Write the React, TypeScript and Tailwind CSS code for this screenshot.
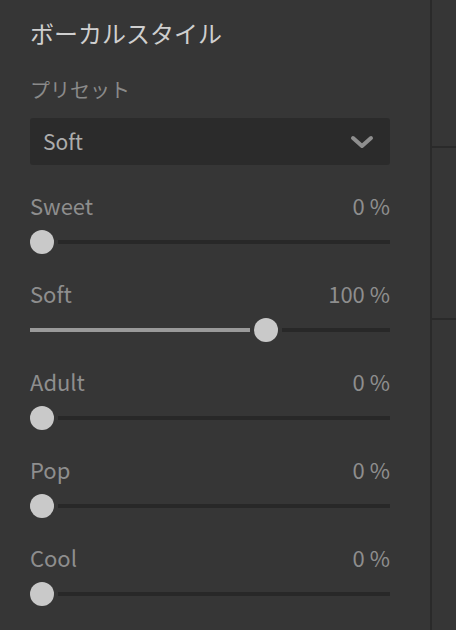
import React from "react";

const font = { fontFamily: '"Noto Sans CJK JP", "Noto Sans", sans-serif' };

function Slider({ label, value, filled }: { label: string; value: string; filled: number }) {
  return (
    <div className="flex flex-col">
      <div className="flex justify-between items-center h-[30px] text-[22px] text-[#8e8e8e] leading-none">
        <span>{label}</span>
        <span>{value}</span>
      </div>
      <div className="flex items-center gap-[4px] h-[24px] mt-[10px]">
        {filled > 0 && <div className="h-[4px] bg-[#9a9a9a]" style={{ width: filled }} />}
        <div className="w-[24px] h-[24px] rounded-full bg-[#c9c9c9] shrink-0" />
        <div className="h-[4px] flex-1 bg-[#282828]" />
      </div>
    </div>
  );
}

export default function App() {
  return (
    <div className="w-[456px] h-[630px] bg-[#363636] flex overflow-hidden" style={font}>
      <div className="w-[432px] shrink-0 border-r-2 border-[#2a2a2a] pl-[30px] pr-[40px] flex flex-col">
        <div className="mt-[17px] h-[32px] flex items-center text-[24px] text-[#cfcfcf] leading-none">ボーカルスタイル</div>
        <div className="mt-[27px] h-[28px] flex items-center text-[20px] text-[#8a8a8a] leading-none">プリセット</div>
        <div className="mt-[14px] h-[47px] rounded-[3px] bg-[#2b2b2b] flex items-center justify-between pl-[13px] pr-[16px]">
          <span className="text-[21px] text-[#adadad] leading-none">Soft</span>
          <svg width="24" height="16" viewBox="0 0 24 16">
            <path d="M3 4 L12 12 L21 4" fill="none" stroke="#8f8f8f" strokeWidth="4" strokeLinecap="round" strokeLinejoin="round" />
          </svg>
        </div>
        <div className="mt-[25px] flex flex-col gap-[24px]">
          <Slider label="Sweet" value="0 %" filled={0} />
          <Slider label="Soft" value="100 %" filled={220} />
          <Slider label="Adult" value="0 %" filled={0} />
          <Slider label="Pop" value="0 %" filled={0} />
          <Slider label="Cool" value="0 %" filled={0} />
        </div>
      </div>
      <div className="flex-1 flex flex-col">
        <div className="h-[148px] border-b-2 border-[#2a2a2a]" />
        <div className="h-[172px] border-b-2 border-[#2a2a2a]" />
        <div className="flex-1" />
      </div>
    </div>
  );
}
